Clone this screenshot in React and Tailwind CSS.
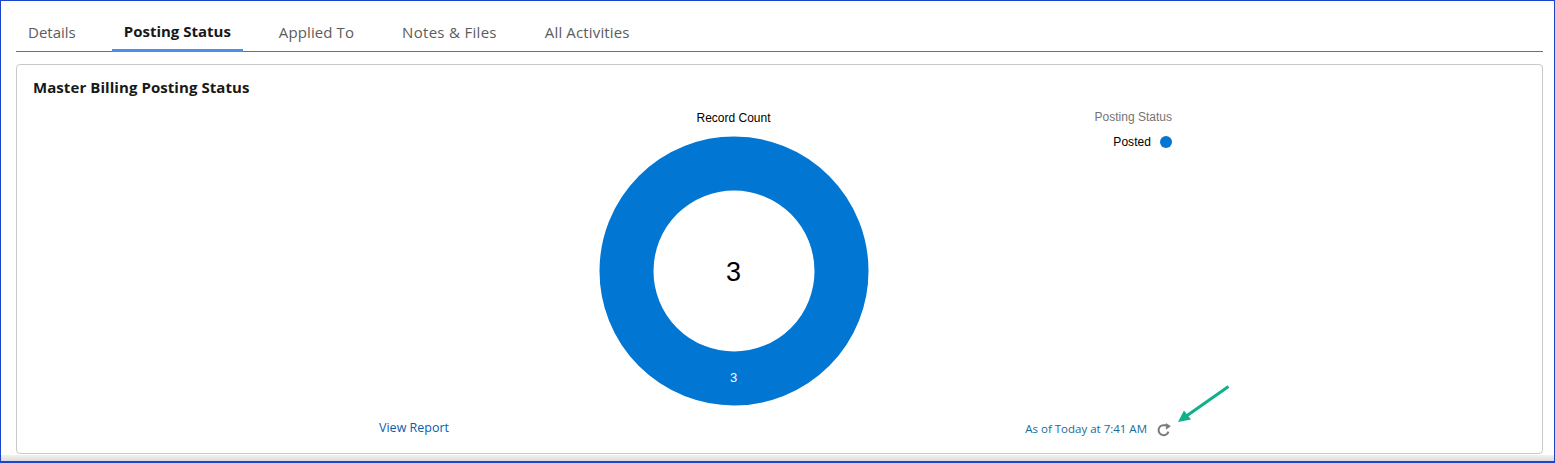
export default function App() {
  const tabs = ["Details", "Posting Status", "Applied To", "Notes & Files", "All Activities"];
  return (
    <div className="relative flex h-[463px] w-[1555px] flex-col overflow-hidden border border-b-2 border-[#1c45c9] bg-white pl-[15px] pr-[11px] pt-[11px] [font-family:'Open_Sans','Noto_Sans',sans-serif]">
      <div className="flex h-[40px] gap-6 border-b border-[#6f6f6f]">
        {tabs.map((t, i) => (
          <div
            key={t}
            className={
              i === 1
                ? "-mb-px flex h-[40px] items-center border-b-[3px] border-[#4a90e8] px-3 pt-[1px] text-[15px] font-bold text-[#181818]"
                : "flex h-[40px] items-center px-3 pt-[1px] text-[15px] text-[#5c5c5c] " + (i === 2 ? "tracking-[0.1px]" : i === 3 ? "tracking-[0.3px]" : i === 4 ? "tracking-[0.15px]" : "")
            }
          >
            {t}
          </div>
        ))}
      </div>
      <div className="mt-[12px] flex h-[390px] flex-col rounded border border-[#c9c9c9] bg-white">
        <h2 className="pl-4 pt-[11px] text-[15px] leading-[22px] font-bold tracking-[0.07px] text-[#181818]">Master Billing Posting Status</h2>
        <div className="relative ml-[278px] mt-[12px] flex w-[877px] flex-col items-center [font-family:'Liberation_Sans',Arial,sans-serif]">
          <div className="text-[12px] leading-[16px] text-black">Record Count</div>
          <div className="relative mt-[10px] h-[270px] w-[270px]">
            <svg width="270" height="270" viewBox="0 0 270 270">
              <circle cx="135" cy="135" r="107.5" fill="none" stroke="#0176d3" strokeWidth="54" />
            </svg>
            <div className="absolute left-0 right-0 top-[119px] text-center text-[27px] leading-[34px] text-black">3</div>
            <div className="absolute left-0 right-0 top-[234px] text-center text-[13px] leading-[16px] text-white">3</div>
          </div>
          <div className="absolute right-0 -top-px flex flex-col items-end">
            <div className="text-[12px] leading-[16px] text-[#747474]">Posting Status</div>
            <div className="mt-[9px] flex items-center gap-[9px]">
              <span className="text-[12px] leading-[16px] tracking-[0.05px] text-black">Posted</span>
              <span className="h-3 w-3 rounded-full bg-[#0176d3]" />
            </div>
          </div>
        </div>
        <div className="mt-[12px] flex items-center pl-[362px] pr-[371px] leading-[16px]">
          <a className="text-[12.5px] text-[#0b5cab]">View Report</a>
          <div className="ml-auto mt-[2px] flex items-center gap-[10px]">
            <span className="text-[11.5px] text-[#1a6b94]">As of Today at 7:41 AM</span>
            <svg className="mt-[3px]" width="14" height="14" viewBox="0 0 14 14" fill="none" stroke="#7a7a7a" strokeWidth="2">
              <path d="M11.4 8.6A5 5 0 1 1 6.5 2.2H10" />
              <path d="M9.2 0.6L13.4 3.2L9.2 6.2Z" strokeWidth="0.6" fill="#7a7a7a" />
            </svg>
          </div>
        </div>
      </div>
      <div className="absolute bottom-0 left-0 right-0 h-[6px] bg-gradient-to-b from-[#f1f1f1] to-[#dcdcdc]" />
      <svg className="absolute left-[1176px] top-[383px]" width="54" height="40" viewBox="0 0 54 40">
        <path d="M51.5 2.5L8 33" stroke="#10b08a" strokeWidth="3" fill="none" />
        <path d="M1 38L7 26.5L14 35.5Z" fill="#10b08a" />
      </svg>
    </div>
  );
}
